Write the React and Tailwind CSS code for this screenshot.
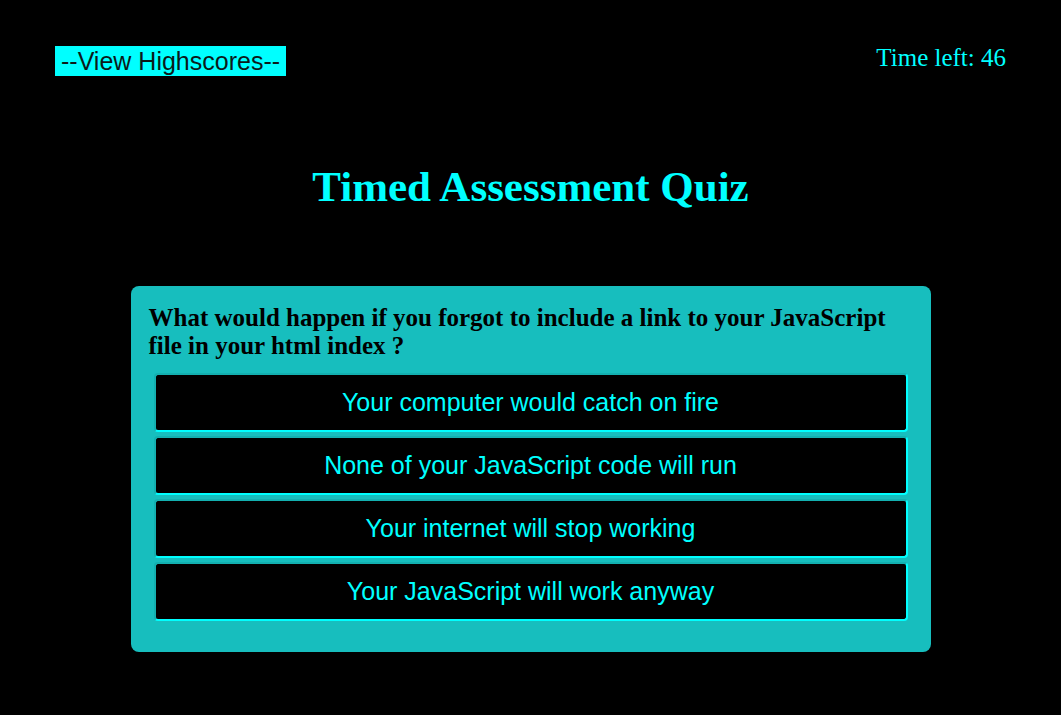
export default function App() {
  const choices = [
    "Your computer would catch on fire",
    "None of your JavaScript code will run",
    "Your internet will stop working",
    "Your JavaScript will work anyway",
  ];

  return (
    <div className="min-h-[715px] w-full bg-black font-['Liberation_Serif',serif]">
      <header className="flex items-start justify-between px-[55px] pt-[46px]">
        <a
          href="#"
          className="bg-[#00ffff] px-[6px] h-[30px] leading-[30px] text-[25px] text-[#0b1a1a] font-['Liberation_Sans',Arial,sans-serif]"
        >
          --View Highscores--
        </a>
        <p className="text-[#00ffff] text-[25px] leading-[24px]">Time left: 46</p>
      </header>

      <h1 className="mt-[86px] text-center text-[#00ffff] text-[43px] font-bold leading-[50px]">
        Timed Assessment Quiz
      </h1>

      <main className="mx-auto mt-[74px] w-[800px] rounded-[8px] bg-[#17bebe] px-[18px] pt-[18px] pb-[31px]">
        <h2 className="text-[25px] font-bold leading-[28px] text-black pr-[20px]">
          What would happen if you forgot to include a link to your JavaScript file in your html index ?
        </h2>
        <div className="mt-[13px] flex flex-col gap-[4px] px-[5px]">
          {choices.map((c) => (
            <button
              key={c}
              className="h-[59px] w-full rounded-[4px] border-2 border-t-[#13b0b0] border-l-[#13b0b0] border-b-[#00ffff] border-r-[#00ffff] bg-black text-[25px] text-[#00ffff] font-['Liberation_Sans',Arial,sans-serif]"
            >
              {c}
            </button>
          ))}
        </div>
      </main>
    </div>
  );
}
